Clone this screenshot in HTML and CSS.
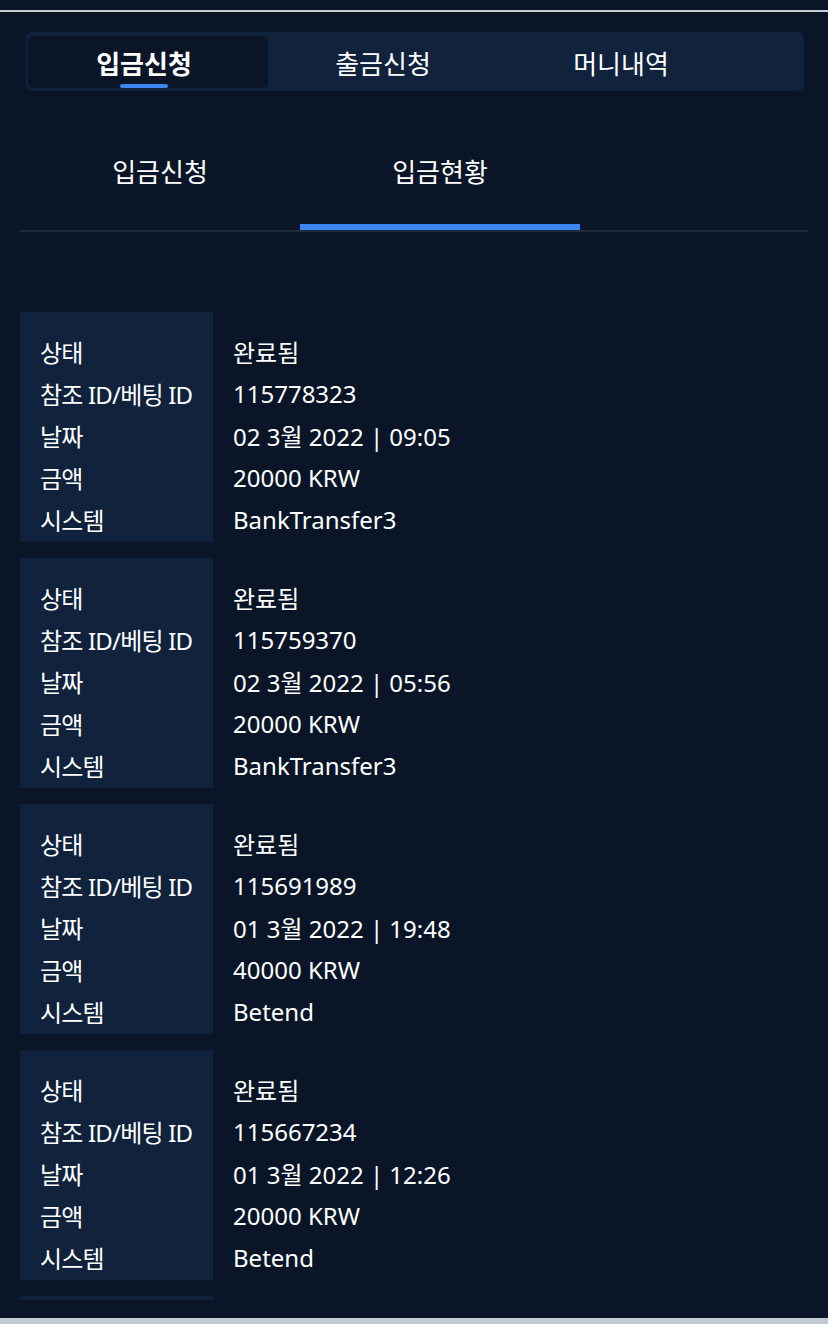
FILE: index.html
```html
<!DOCTYPE html>
<html lang="ko">

<head>
  <meta charset="UTF-8">
  <meta name="viewport" content="width=device-width, initial-scale=1.0">
  <title>입금현황</title>
  <link rel="stylesheet" href="styles.css">
</head>

<body>
  <div class="topline"></div>
  <div class="page">
    <div class="tabs">
      <div class="tab active">입금신청</div>
      <div class="tab">출금신청</div>
      <div class="tab">머니내역</div>
    </div>

    <div class="subtabs">
      <div class="subtab">입금신청</div>
      <div class="subtab active">입금현황</div>
    </div>

    <div class="list">
      <div class="card">
        <div class="label">상태</div><div class="value">완료됨</div>
        <div class="label">참조 ID/베팅 ID</div><div class="value">115778323</div>
        <div class="label">날짜</div><div class="value">02 3월 2022 | 09:05</div>
        <div class="label">금액</div><div class="value">20000 KRW</div>
        <div class="label">시스템</div><div class="value">BankTransfer3</div>
      </div>
      <div class="card">
        <div class="label">상태</div><div class="value">완료됨</div>
        <div class="label">참조 ID/베팅 ID</div><div class="value">115759370</div>
        <div class="label">날짜</div><div class="value">02 3월 2022 | 05:56</div>
        <div class="label">금액</div><div class="value">20000 KRW</div>
        <div class="label">시스템</div><div class="value">BankTransfer3</div>
      </div>
      <div class="card">
        <div class="label">상태</div><div class="value">완료됨</div>
        <div class="label">참조 ID/베팅 ID</div><div class="value">115691989</div>
        <div class="label">날짜</div><div class="value">01 3월 2022 | 19:48</div>
        <div class="label">금액</div><div class="value">40000 KRW</div>
        <div class="label">시스템</div><div class="value">Betend</div>
      </div>
      <div class="card">
        <div class="label">상태</div><div class="value">완료됨</div>
        <div class="label">참조 ID/베팅 ID</div><div class="value">115667234</div>
        <div class="label">날짜</div><div class="value">01 3월 2022 | 12:26</div>
        <div class="label">금액</div><div class="value">20000 KRW</div>
        <div class="label">시스템</div><div class="value">Betend</div>
      </div>
      <!-- next card, scrolled out of view -->
      <div class="card"></div>
    </div>
  </div>
  <div class="bottombar"></div>
</body>

</html>
```

FILE: styles.css
```css
body {
  margin: 0;
  background-color: #0a1628;
  color: #fff;
  font-family: "Noto Sans", "Noto Sans CJK KR", sans-serif;
}

.topline {
  height: 10px;
  border-bottom: 2px solid #c9cdd2;
}

.page {
  padding: 20px 20px 0 20px;
}

/* main tabs */
.tabs {
  display: flex;
  margin: 0 4px 0 6px;
  padding: 4px 2px 3px 2px;
  background-color: #10223c;
  border-radius: 6px;
}

.tab {
  width: 230px;
  height: 52px;
  padding-right: 8px;
  display: flex;
  align-items: center;
  justify-content: center;
  font-family: "Noto Sans CJK KR", sans-serif;
  font-size: 26px;
  border-radius: 5px;
  position: relative;
}

.tab.active {
  width: 232px;
  background-color: #0a1628;
  font-weight: bold;
}

.tab.active::after {
  content: "";
  position: absolute;
  left: 92px;
  bottom: 0;
  width: 48px;
  height: 4px;
  border-radius: 2px;
  background-color: #3b86f0;
}

/* sub tabs */
.subtabs {
  display: flex;
  margin-top: 20px;
  border-bottom: 2px solid #1e2b3c;
}

.subtab {
  width: 280px;
  padding: 44px 0 37px 0;
  line-height: 32px;
  text-align: center;
  font-family: "Noto Sans CJK KR", sans-serif;
  font-size: 26px;
  border-bottom: 6px solid transparent;
}

.subtab.active {
  border-bottom-color: #3b86f0;
}

/* history list */
.list {
  margin-top: 80px;
  height: 988px;
  overflow: hidden;
}

.card {
  display: grid;
  grid-template-columns: 193px 1fr;
  grid-auto-rows: 42px;
  min-height: 210px;
  padding: 18px 0 2px 0;
  margin-bottom: 16px;
  font-size: 24px;
  background: linear-gradient(to right, #10223c 193px, transparent 193px);
}

.label,
.value {
  display: flex;
  align-items: center;
  white-space: nowrap;
}

.label {
  padding-left: 20px;
  letter-spacing: -0.8px;
}

.value {
  padding-left: 20px;
}

.bottombar {
  margin-top: 18px;
  height: 6px;
  background-color: #c2c9d1;
}
```
